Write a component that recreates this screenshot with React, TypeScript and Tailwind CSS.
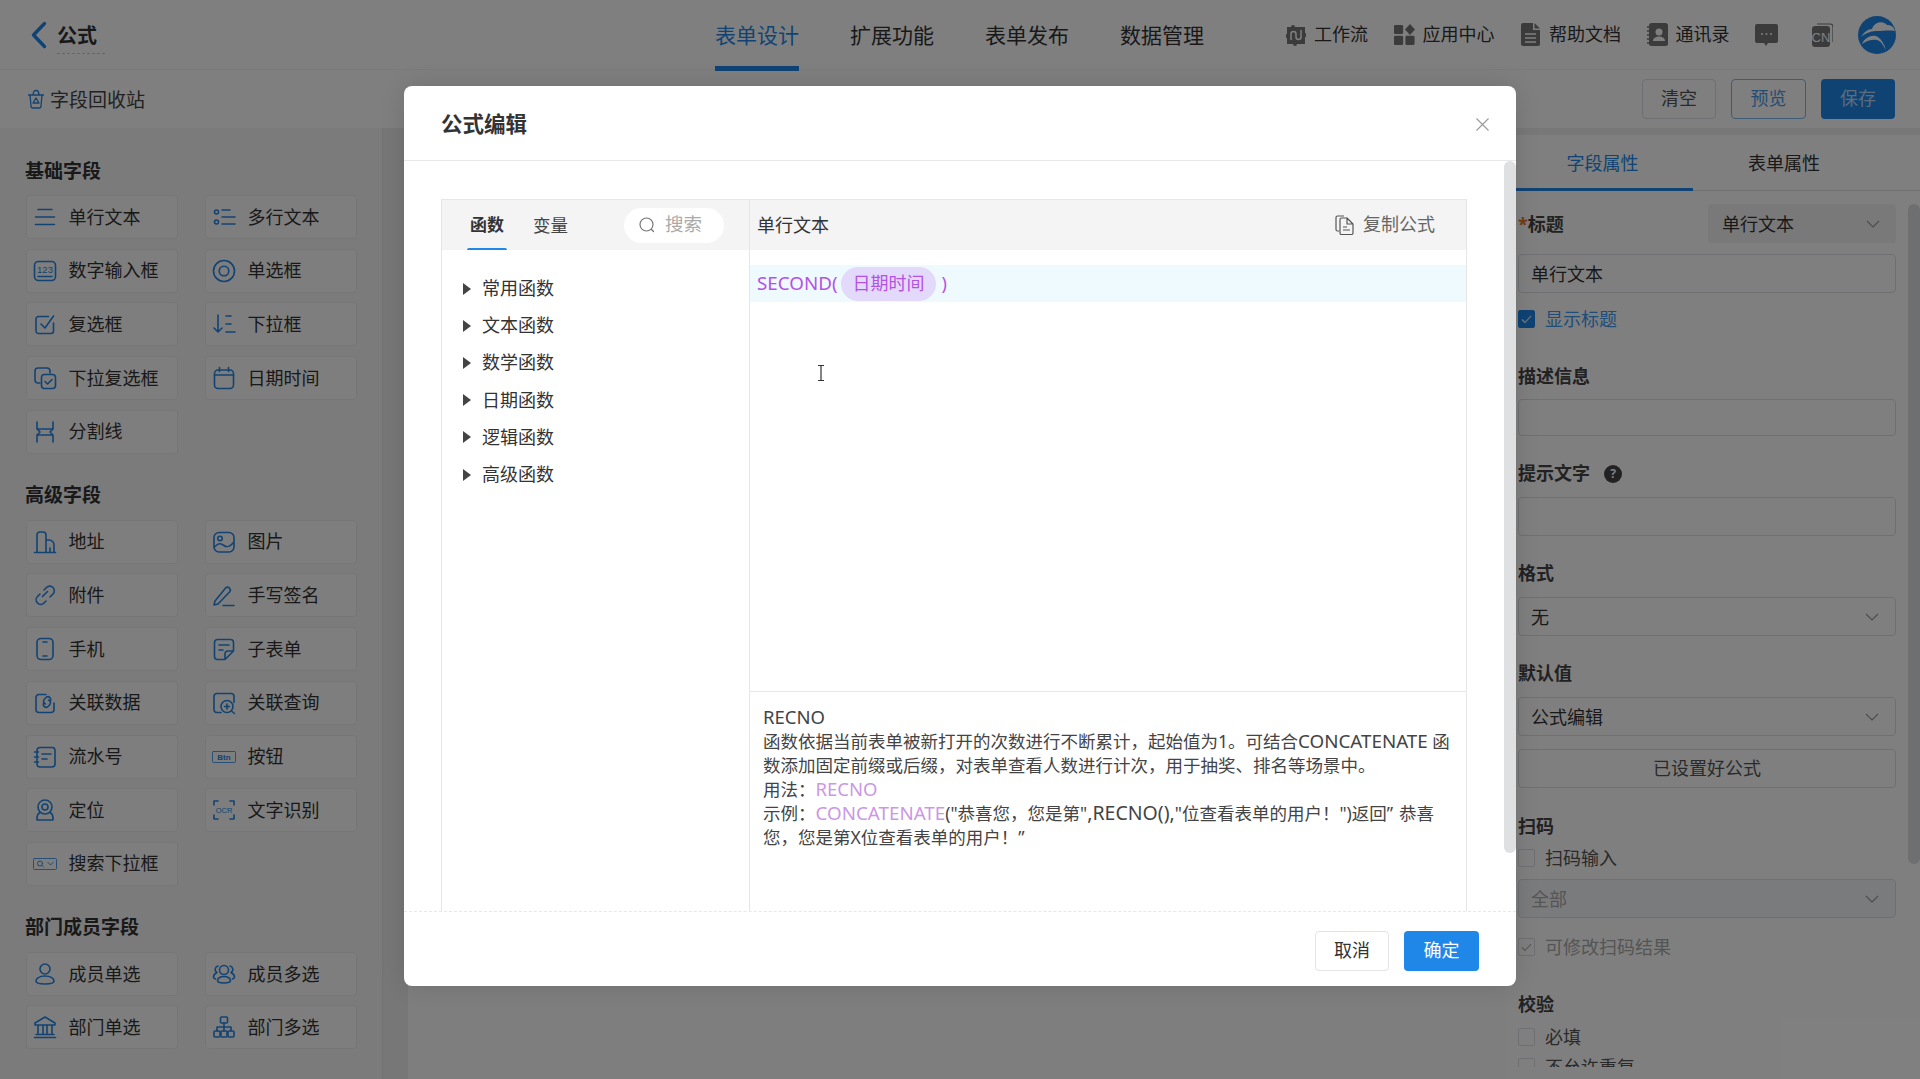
import React from "react";

const S = ({ children, w = 24, h = 24, vb = "0 0 24 24", cls = "" }: { children: React.ReactNode; w?: number; h?: number; vb?: string; cls?: string }) => (
  <svg width={w} height={h} viewBox={vb} fill="none" stroke="currentColor" strokeWidth="1.6" strokeLinecap="round" strokeLinejoin="round" className={cls}>
    {children}
  </svg>
);

const icons: Record<string, React.ReactNode> = {
  single: <S><path d="M5 4.500h14M2.500 12h19M2.500 19.500h19" /></S>,
  multi: <S><circle cx="4.500" cy="7" r="2" /><circle cx="4.500" cy="17" r="2" /><path d="M10 5h8M10 12h13M10 19h13" /></S>,
  number: (
    <S>
      <rect x="1.500" y="2.500" width="21" height="19" rx="4" />
      <path d="M5 17.500h14" />
      <text x="12" y="13.500" textAnchor="middle" fontSize="9.500" fill="currentColor" stroke="none" fontFamily="Liberation Sans">123</text>
    </S>
  ),
  radio: <S><circle cx="12" cy="12" r="10.500" /><circle cx="12" cy="12" r="4.800" /></S>,
  check: <S><path d="M20.500 11v8a2.500 2.500 0 0 1-2.500 2.500H5.500A2.500 2.500 0 0 1 3 19V7a2.500 2.500 0 0 1 2.500-2.500h10" /><path d="M8 12l4 4 8.500-12" /></S>,
  dropdown: <S><path d="M6 3v17M2 16l4 4 4-4M14 4h5M14 12h5M14 20h9" /></S>,
  dropcheck: (
    <S>
      <path d="M7 17H5a3 3 0 0 1-3-3V5a3 3 0 0 1 3-3h9a3 3 0 0 1 3 3v2" />
      <rect x="8.500" y="8.500" width="14" height="14" rx="3" />
      <path d="M12 15.500l2.500 2.500 4.500-4.500" />
    </S>
  ),
  date: <S><rect x="2.500" y="4" width="19" height="18.500" rx="3.500" /><path d="M2.500 9h19M7.500 1.500v4M16.500 1.500v4" /></S>,
  divider: <S><path d="M4 2v7h16V2M4 22v-7h16v7M4 9l3 3-3 3M20 9l-3 3 3 3" /></S>,
  address: <S><path d="M1.500 22.500h21M4 22V5a3 3 0 0 1 3-3h3a3 3 0 0 1 3 3v17M13 10h3a5 5 0 0 1 5 5v7M17 18v4" /></S>,
  image: <S><rect x="2" y="2.500" width="20" height="19.500" rx="5" /><circle cx="8" cy="8.500" r="2.200" /><path d="M2.500 17c4-4 6-4 9.500-1.500s6 1 9.500-3" /></S>,
  attach: <S><path d="M9.500 13.500l5-5M7 11l-2.500 2.500a4.500 4.500 0 0 0 6.500 6.500l2-2M11 7l2.500-2.500a4.500 4.500 0 1 1 6.500 6.500L17 14" /></S>,
  sign: <S><path d="M3 18l-1 4 4-1L18 8.500a3 3 0 0 0-4-4L3 18ZM11 22.500h11" /></S>,
  phone: <S><rect x="4" y="1.500" width="16" height="21" rx="4" /><path d="M10 5h4M10 19h4" /></S>,
  subform: <S><path d="M21.500 14V5.500a3 3 0 0 0-3-3h-13a3 3 0 0 0-3 3v14a3 3 0 0 0 3 3H13ZM21.500 14H16a3 3 0 0 0-3 3v5.500M7 8h10M7 13h4" /></S>,
  relData: <S><path d="M21 12v6.500a3 3 0 0 1-3 3H6a3 3 0 0 1-3-3v-12a3 3 0 0 1 3-3h7" /><path d="M11 11.500l-.5.500a3 3 0 0 0 4 4l2-2a3 3 0 0 0-1-5M17 10.500l.5-.5a3 3 0 0 0-4-4l-2 2a3 3 0 0 0 1 5" /></S>,
  relQuery: <S><path d="M9 21.500H5a3 3 0 0 1-3-3v-13a3 3 0 0 1 3-3h14a3 3 0 0 1 3 3v6" /><circle cx="15" cy="15.500" r="6" /><path d="M15 13v5M12.500 15.500h5M20 20.500l2.500 2" /></S>,
  serial: <S><rect x="4" y="2.500" width="18" height="19.500" rx="3" /><path d="M1.500 7h4M1.500 12h4M1.500 17h4M9 9h9M9 14h5" /></S>,
  btn: (
    <S vb="0 0 24 12" h={12}>
      <rect x="0.500" y="0.500" width="23" height="11" rx="1" strokeWidth="0.8" />
      <text x="12" y="9" textAnchor="middle" fontSize="8" fontWeight="700" fill="currentColor" stroke="none" fontFamily="Liberation Sans">Btn</text>
    </S>
  ),
  location: <S><circle cx="12" cy="9" r="7" /><circle cx="12" cy="9" r="3" /><path d="M7 14.500c-2 1-3 3-3 5.500v2h16v-2c0-2.500-1-4.500-3-5.500" /></S>,
  ocr: (
    <S>
      <path d="M2 7V3h4M18 3h4v4M2 17v4h4M18 21h4v-4" />
      <text x="12" y="15" textAnchor="middle" fontSize="7.500" fill="currentColor" stroke="none" fontFamily="Liberation Sans">OCR</text>
    </S>
  ),
  searchSel: <S vb="0 0 24 12" h={12}><rect x="0.500" y="0.500" width="23" height="11" rx="1" strokeWidth="0.8" /><circle cx="7" cy="5.500" r="2.500" strokeWidth="0.900" /><path d="M9 7.500l1.500 1.500M15 4.500l2.500 2.500 2.500-2.500" strokeWidth="0.900" /></S>,
  person: <S><circle cx="12" cy="7" r="5" /><path d="M12 14c-6 0-9 2.500-9 5s3 3 9 3 9-.5 9-3-3-5-9-5Z" /></S>,
  people: <S><circle cx="12" cy="8" r="4.500" /><path d="M12 14.500c-4 0-6.500 2-6.500 4s2.500 2.500 6.500 2.500 6.500-.5 6.500-2.500-2.500-4-6.500-4ZM6 4a3.500 3.500 0 0 0-1 6.500c-2 1-3.500 2.500-3.500 4.500 0 1 .5 1.500 2 2M18 4a3.500 3.500 0 0 1 1 6.500c2 1 3.500 2.500 3.500 4.500 0 1-.5 1.500-2 2" /></S>,
  bank: <S><path d="M12 2L2 8v2h20V8L12 2ZM5 10v9M10 10v9M14 10v9M19 10v9M3 19.500h18M1.500 22.500h21" /></S>,
  org: <S><rect x="8.500" y="2" width="7" height="6" rx="1" /><rect x="2" y="16" width="6" height="6" rx="1" /><rect x="9" y="16" width="6" height="6" rx="1" /><rect x="16" y="16" width="6" height="6" rx="1" /><path d="M12 8v8M5 16v-4h14v4" /></S>,
};

type It = [string, string];

const Item = ({ icon, label, h }: { icon: string; label: string; h: string }) => (
  <div className={`flex items-center ${h} rounded-[4px] border border-[#ececec] bg-[#fdfdfd] pl-[6px] text-[18px] text-[#333]`}>
    <span className="flex w-[24px] justify-center text-[#2486e6]">{icons[icon]}</span>
    <span className="ml-[11.500px] whitespace-nowrap">{label}</span>
  </div>
);

const Group = ({ title, items, cls, gap, mb }: { title: string; items: It[]; cls: string; gap: string; mb: string }) => (
  <section className={cls}>
    <h3 className={`-ml-px h-[26px] text-[19px] font-bold leading-[26px] text-[#333] ${mb}`}>{title}</h3>
    <div className={`grid w-[331px] grid-cols-[152px_152px] gap-x-[27px] ${gap}`}>
      {items.map(([i, l]) => <Item key={l} icon={i} label={l} h="h-[44px]" />)}
    </div>
  </section>
);

const Chevron = ({ cls = "text-[#999]" }: { cls?: string }) => (
  <svg width="14" height="9" viewBox="0 0 14 9" fill="none" stroke="currentColor" strokeWidth="1.100" className={`absolute right-[16px] top-1/2 -translate-y-1/2 ${cls}`}>
    <path d="M1 1.500l6 6 6-6" />
  </svg>
);

const Box = ({ cls = "", children, text = "" }: { cls?: string; children?: React.ReactNode; text?: string }) => (
  <div className={`relative flex w-full items-center rounded-[4px] border border-[#dcdfe6] pl-[12px] pt-[2px] text-[18px] text-[#333] ${cls}`}>
    {text}
    {children}
  </div>
);

const Lab = ({ children, cls = "" }: { children: React.ReactNode; cls?: string }) => (
  <div className={`flex h-[24px] items-center text-[18px] font-bold leading-[24px] text-[#444] ${cls}`}>{children}</div>
);

const Check = ({ label, cls = "", on = false, dis = false }: { label: string; cls?: string; on?: boolean; dis?: boolean }) => (
  <div className={`flex h-[18px] items-center text-[18px] ${cls}`}>
    <span className={`flex h-[18px] w-[17px] items-center justify-center rounded-[2px] border ${on ? "border-[#1f87e8] bg-[#1f87e8]" : "border-[#dcdfe6]"}`}>
      {(on || dis) && (
        <svg width="11" height="9" viewBox="0 0 11 9" fill="none" stroke={on ? "#fff" : "#aaa"} strokeWidth="1.100"><path d="M1 4.500l3 3 6-6.500" /></svg>
      )}
    </span>
    <span className={`ml-[10px] whitespace-nowrap ${on ? "text-[#3f9bf0]" : dis ? "text-[#aaa]" : "text-[#555]"}`}>{label}</span>
  </div>
);

const HeadBtn = ({ label, icon }: { label: string; icon: React.ReactNode }) => (
  <div className="flex items-center text-[18px] text-[#333]">
    <span className="flex w-[21px] justify-center text-[#777]">{icon}</span>
    <span className="ml-[8px] whitespace-nowrap">{label}</span>
  </div>
);

const Purple = ({ children, cls = "" }: { children: React.ReactNode; cls?: string }) => <span className={`text-[#cb98e4] ${cls}`}>{children}</span>;

const tree = ["常用函数", "文本函数", "数学函数", "日期函数", "逻辑函数", "高级函数"];

export default function App() {
  return (
    <div className="relative h-[1079px] w-full overflow-hidden bg-[#f0f0f0] font-['Noto_Sans','Noto_Sans_CJK_SC',sans-serif]">
      {/* top bar */}
      <header className="flex h-[70px] items-center border-b border-[#f4f4f4] bg-white">
        <div className="flex w-[715px] items-center pl-[30px]">
          <svg width="18" height="28" viewBox="0 0 18 28" fill="none" stroke="#1f87e8" strokeWidth="3.400" strokeLinecap="round" strokeLinejoin="round">
            <path d="M14.500 2.500L3.500 14l11 11.500" />
          </svg>
          <div className="ml-[9px] mt-[6px] w-[48px] border-b border-dashed border-[#ccc] pb-[3px] text-[20px] font-bold leading-[28px] text-[#333]">公式</div>
        </div>
        <nav className="flex h-full gap-[51px] text-[21px] text-[#333]">
          {["表单设计", "扩展功能", "表单发布", "数据管理"].map((t, i) => (
            <div key={t} className={`relative flex items-center whitespace-nowrap pt-[2px] ${i === 0 ? "text-[#2288e8]" : ""}`}>
              {t}
              {i === 0 && <span className="absolute bottom-[-2px] left-0 h-[5px] w-full bg-[#1f87e8]" />}
            </div>
          ))}
        </nav>
        <div className="ml-[81px] flex items-center gap-[25.500px]">
          <HeadBtn label="工作流" icon={
            <svg width="20" height="22" viewBox="0 0 20 22" fill="currentColor"><path d="M1 3h4a2 2 0 0 1 4 0h10v6a2 2 0 0 1 0 4v7h-8a2 2 0 0 1-4 0H1v-6a2 2 0 0 1 0-4V3Z" /><path d="M5 16V10a2.500 2.500 0 0 1 5 0v3a2.500 2.500 0 0 0 5 0V6" fill="none" stroke="#fff" strokeWidth="1.500" /></svg>
          } />
          <HeadBtn label="应用中心" icon={
            <svg width="23" height="23" viewBox="0 0 23 23" fill="currentColor"><rect x="0" y="1" width="10" height="10" rx="1.500" /><path d="M17.500 0l5.500 6-5.500 6-5.500-6Z" /><rect x="0" y="13" width="10" height="10" rx="1.500" /><rect x="12.500" y="13" width="10" height="10" rx="1.500" /></svg>
          } />
          <HeadBtn label="帮助文档" icon={
            <svg width="19" height="23" viewBox="0 0 19 23" fill="currentColor"><path d="M2 0h10v7h7v14a2 2 0 0 1-2 2H2a2 2 0 0 1-2-2V2a2 2 0 0 1 2-2ZM13.500 0L19 5.500h-5.500Z" /><path d="M4 11h11M4 15h11M4 19h11" stroke="#fff" strokeWidth="1.400" /></svg>
          } />
          <HeadBtn label="通讯录" icon={
            <svg width="21" height="23" viewBox="0 0 21 23" fill="currentColor"><rect x="2" y="0" width="19" height="23" rx="2.500" /><circle cx="12" cy="9" r="3.500" fill="#fff" /><path d="M6 18c0-3 3-4.500 6-4.500s6 1.500 6 4.500Z" fill="#fff" /><path d="M0 4h3M0 8h3M0 12h3M0 16h3M0 20h3" stroke="currentColor" strokeWidth="1.500" /></svg>
          } />
          <span className="text-[#777]">
            <svg width="23" height="23" viewBox="0 0 23 23" fill="currentColor" className="block"><path d="M2 1h19a2 2 0 0 1 2 2v15a2 2 0 0 1-2 2h-8l-2 3-2-3H2a2 2 0 0 1-2-2V3a2 2 0 0 1 2-2Z" /><circle cx="7" cy="11" r="1" fill="#fff" /><circle cx="11.500" cy="11" r="1" fill="#fff" /><circle cx="16" cy="11" r="1" fill="#fff" /></svg>
          </span>
          <span className="ml-[8px] text-[#777]">
            <svg width="21" height="24" viewBox="0 0 21 24" className="block"><path d="M5 1h13a3 3 0 0 1 3 3v15" fill="none" stroke="currentColor" strokeWidth="1.200" /><rect x="0" y="3" width="18" height="21" rx="3" fill="currentColor" /><text x="9" y="19" textAnchor="middle" fontSize="13" fill="#fff" fontFamily="Liberation Sans">CN</text></svg>
          </span>
          <span>
            <svg width="38" height="38" viewBox="0 0 38 38" className="block">
              <circle cx="19" cy="19" r="19" fill="#1f87e8" />
              <path d="M3 21c3-5 7-8 11-8 2-7 11-9 15-4 4 0 7 2 8 6-6-1-13 0-17 0-6 0-11 1-17 6Z" fill="#fff" />
              <path d="M4 28c3-7 11-10 16-7 4 3 6 7 8 13-3-5-5-9-9-10-4-1-10 0-15 4Z" fill="#fff" />
            </svg>
          </span>
        </div>
      </header>

      {/* tool bar */}
      <div className="flex h-[58px] items-center bg-white pl-[27px] pr-[25px]">
        <svg width="18" height="20" viewBox="0 0 18 20" fill="none" stroke="#2486e6" strokeWidth="1.300" strokeLinejoin="round">
          <path d="M1 6h16M3 6l1 11a2 2 0 0 0 2 2h6a2 2 0 0 0 2-2l1-11M6 6c0-6 6-6 6 0M9 9l-3 5h6Z" />
        </svg>
        <span className="ml-[5px] mt-[2px] text-[19px] text-[#444]">字段回收站</span>
        <div className="ml-auto flex gap-[15px] text-[18px]">
          <button className="h-[40px] w-[74px] rounded-[4px] border border-[#dcdfe6] pb-[2px] text-[#555]">清空</button>
          <button className="h-[40px] w-[75px] rounded-[4px] border border-[#7fb8ee] pb-[2px] text-[#4a9be8]">预览</button>
          <button className="h-[40px] w-[74px] rounded-[4px] bg-[#1f87e8] pb-[2px] text-[#b8d9f6]">保存</button>
        </div>
      </div>

      <main className="flex h-[951px]">
        {/* left fields */}
        <aside className="w-[383px] shrink-0 border-r border-[#e6e6e6] bg-[#f6f6f6] pl-[26px] pt-[30px]">
          <Group title="基础字段" gap="gap-y-[9.700px]" cls="" mb="mb-[11px]" items={[
            ["single", "单行文本"], ["multi", "多行文本"], ["number", "数字输入框"], ["radio", "单选框"], ["check", "复选框"],
            ["dropdown", "下拉框"], ["dropcheck", "下拉复选框"], ["date", "日期时间"], ["divider", "分割线"],
          ]} />
          <Group title="高级字段" gap="gap-y-[9.700px]" cls="mt-[28.500px]" mb="mb-[11.500px]" items={[
            ["address", "地址"], ["image", "图片"], ["attach", "附件"], ["sign", "手写签名"], ["phone", "手机"], ["subform", "子表单"],
            ["relData", "关联数据"], ["relQuery", "关联查询"], ["serial", "流水号"], ["btn", "按钮"], ["location", "定位"], ["ocr", "文字识别"],
            ["searchSel", "搜索下拉框"],
          ]} />
          <Group title="部门成员字段" gap="gap-y-[9px]" cls="mt-[28.500px]" mb="mb-[12px]" items={[
            ["person", "成员单选"], ["people", "成员多选"], ["bank", "部门单选"], ["org", "部门多选"],
          ]} />
        </aside>
        <div className="w-[25px] shrink-0 bg-[#eeeeee]" />
        <div className="flex-1 bg-[#fcfcfc]" />

        {/* right props */}
        <aside className="relative mt-[7px] h-[944px] w-[415px] shrink-0 bg-white">
          <div className="flex h-[56px] border-b border-[#e0e0e0] text-[18px]">
            <div className="relative flex h-[56px] w-[188px] items-center justify-center pl-[7px] text-[#2288e8]">
              字段属性
              <span className="absolute bottom-0 left-0 h-[3px] w-full bg-[#1f87e8]" />
            </div>
            <div className="flex w-[182px] items-center justify-center pt-[2px] text-[#333]">表单属性</div>
          </div>
          <div className="h-[876px] w-[391px] overflow-hidden pl-[13px]">
            <div className="mt-[13px] flex h-[39px] items-center justify-between">
              <Lab><span className="text-[#e6762c]">*</span>标题</Lab>
              <div className="relative flex h-[39px] w-[188px] items-center rounded-[4px] bg-[#f2f2f2] pl-[14px] pt-[2px] text-[18px] text-[#333]">
                单行文本<Chevron />
              </div>
            </div>
            <Box cls="mt-[11px] h-[39px]" text="单行文本" />
            <Check label="显示标题" on cls="mt-[17px]" />
            <Lab cls="mt-[36px]">描述信息</Lab>
            <Box cls="mt-[11px] h-[37px]" />
            <Lab cls="mt-[25px]">
              提示文字
              <span className="ml-[14px] mt-[2px] flex h-[18px] w-[18px] items-center justify-center rounded-full bg-[#444] text-[12px] font-bold text-white">?</span>
            </Lab>
            <Box cls="mt-[12px] h-[39px]" />
            <Lab cls="mt-[25px]">格式</Lab>
            <Box cls="mt-[12px] h-[39px]" text="无"><Chevron /></Box>
            <Lab cls="mt-[25px]">默认值</Lab>
            <Box cls="mt-[12px] h-[39px]" text="公式编辑"><Chevron /></Box>
            <div className="mt-[13px] flex h-[39px] w-full items-center justify-center rounded-[4px] border border-[#dcdfe6] text-[18px] text-[#555]">已设置好公式</div>
            <Lab cls="mt-[26px]">扫码</Lab>
            <Check label="扫码输入" cls="mt-[11px]" />
            <Box cls="mt-[12px] h-[39px] bg-[#f5f7fa] !text-[#aaa]" text="全部"><Chevron /></Box>
            <Check label="可修改扫码结果" dis cls="mt-[20px]" />
            <Lab cls="mt-[36px]">校验</Lab>
            <Check label="必填" cls="mt-[12px]" />
            <Check label="不允许重复" cls="mt-[12px]" />
          </div>
          <div className="absolute right-0 top-[69px] h-[660px] w-[12px] rounded-[6px] bg-[#dcdfe2]" />
        </aside>
      </main>

      {/* overlay */}
      <div className="absolute inset-0 bg-black/50" />

      {/* dialog */}
      <div className="absolute left-[404px] top-[86px] flex h-[900px] w-[1112px] flex-col overflow-hidden rounded-[8px] bg-white shadow-[0_0_24px_rgba(0,0,0,0.12)]">
        <div className="flex h-[75px] shrink-0 items-center justify-between border-b border-[#e8e8e8] pl-[37px] pr-[27px]">
          <h2 className="mt-[2px] text-[21.500px] font-bold text-[#333]">公式编辑</h2>
          <svg width="13" height="13" viewBox="0 0 13 13" stroke="#999" strokeWidth="1.100" className="mt-[3px]"><path d="M.5.500l12 12M12.500.500l-12 12" /></svg>
        </div>

        <div className="relative min-h-0 flex-1 overflow-hidden pl-[37px] pt-[38px]">
          <div className="h-[800px] w-[1026px] border border-[#e6e6e6] border-b-0">
            <div className="flex h-[50px] bg-[#f4f4f4]">
              <div className="relative flex w-[308px] shrink-0 items-center border-r border-[#e6e6e6] pl-[28px] text-[17px]">
                <span className="relative flex h-[50px] items-center font-bold text-[#333]">
                  函数
                  <span className="absolute bottom-0 left-[-3px] h-[2px] w-[40px] rounded-t-[2px] bg-[#1f87e8]" />
                </span>
                <span className="ml-[29px] mt-[1px] text-[#444] text-[17.500px]">变量</span>
                <div className="ml-auto mr-[25px] flex h-[35px] w-[100px] items-center rounded-full bg-white pl-[15px] text-[18.500px] text-[#aaa]">
                  <svg width="16" height="16" viewBox="0 0 16 16" fill="none" stroke="#777" strokeWidth="1.200" strokeLinecap="round"><circle cx="7.500" cy="7.500" r="6.500" /><path d="M12.500 12.500l2 2" /></svg>
                  <span className="ml-[10px] mt-[-2px]">搜索</span>
                </div>
              </div>
              <div className="flex flex-1 items-center justify-between pl-[7px] pr-[31px] text-[18px] text-[#333]">
                <span>单行文本</span>
                <span className="flex items-center text-[#666]">
                  <svg width="19" height="20" viewBox="0 0 19 20" fill="none" stroke="#555" strokeWidth="1.200" strokeLinejoin="round"><path d="M4 16H2.500A1.500 1.500 0 0 1 1 14.500v-12A1.500 1.500 0 0 1 2.500 1H9" /><path d="M5 4.500A1.500 1.500 0 0 1 6.500 3H12l6 6v9a1.500 1.500 0 0 1-1.500 1.500h-10A1.500 1.500 0 0 1 5 18ZM12 3v6h6M8 12h4M8 15h7" /></svg>
                  <span className="ml-[9px] mt-[-2px]">复制公式</span>
                </span>
              </div>
            </div>
            <div className="flex h-[750px]">
              <div className="w-[308px] shrink-0 border-r border-[#e6e6e6] pl-[21px] pt-[20px] text-[18px] text-[#333]">
                {tree.map((t) => (
                  <div key={t} className="flex h-[37.200px] items-center">
                    <svg width="8" height="12" viewBox="0 0 8 12" fill="#444"><path d="M0 0l8 6-8 6Z" /></svg>
                    <span className="ml-[11px]">{t}</span>
                  </div>
                ))}
              </div>
              <div className="flex-1">
                <div className="h-[442px] border-b border-[#e6e6e6] pt-[15px]">
                  <div className="flex h-[37px] items-center bg-[#eefafd] pl-[7px] text-[18px] text-[#b552e6]">
                    <span className="mt-[-1px] text-[18.800px]">SECOND(</span>
                    <span className="ml-[3px] flex h-[34px] w-[95px] items-center justify-center rounded-full bg-[#e3d9fb] pb-[1px] pl-[1px]">日期时间</span>
                    <span className="ml-[6px] mt-[-1px]">)</span>
                  </div>
                  <svg width="8" height="16" viewBox="0 0 8 16" fill="none" stroke="#333" strokeWidth="1.200" className="ml-[67px] mt-[63px]"><path d="M1 .500h6M4 .500v15M1 15.500h6" /></svg>
                </div>
                <div className="whitespace-nowrap pl-[13px] pt-[13px] text-[17.500px] leading-[24px] text-[#444]">
                  <div className="text-[18.500px]">RECNO</div>
                  <div>函数依据当前表单被新打开的次数进行不断累计，起始值为1。可结合<span className="text-[18.800px]">CONCATENATE</span> 函</div>
                  <div>数添加固定前缀或后缀，对表单查看人数进行计次，用于抽奖、排名等场景中。</div>
                  <div>用法：<Purple cls="text-[18.500px]">RECNO</Purple></div>
                  <div>示例：<Purple cls="text-[18.800px]">CONCATENATE</Purple>("恭喜您，您是第"<span className="text-[19.500px]">,RECNO(),</span>"位查看表单的用户！")返回”<span className="ml-[6px]">恭喜</span></div>
                  <div>您，您是第X位查看表单的用户！”</div>
                </div>
              </div>
            </div>
          </div>
          <div className="absolute right-0 top-0 h-[692px] w-[12px] rounded-[6px] bg-[#dfe0e2]" />
        </div>

        <div className="flex h-[75px] shrink-0 items-center justify-end gap-[15px] border-t border-dashed border-[#e8e8e8] pr-[37px] pt-[3px] text-[18px]">
          <button className="h-[40px] w-[74px] rounded-[4px] border border-[#e4e4e4] text-[#333]">取消</button>
          <button className="h-[40px] w-[75px] rounded-[4px] bg-[#1f87e8] text-white">确定</button>
        </div>
      </div>
    </div>
  );
}
